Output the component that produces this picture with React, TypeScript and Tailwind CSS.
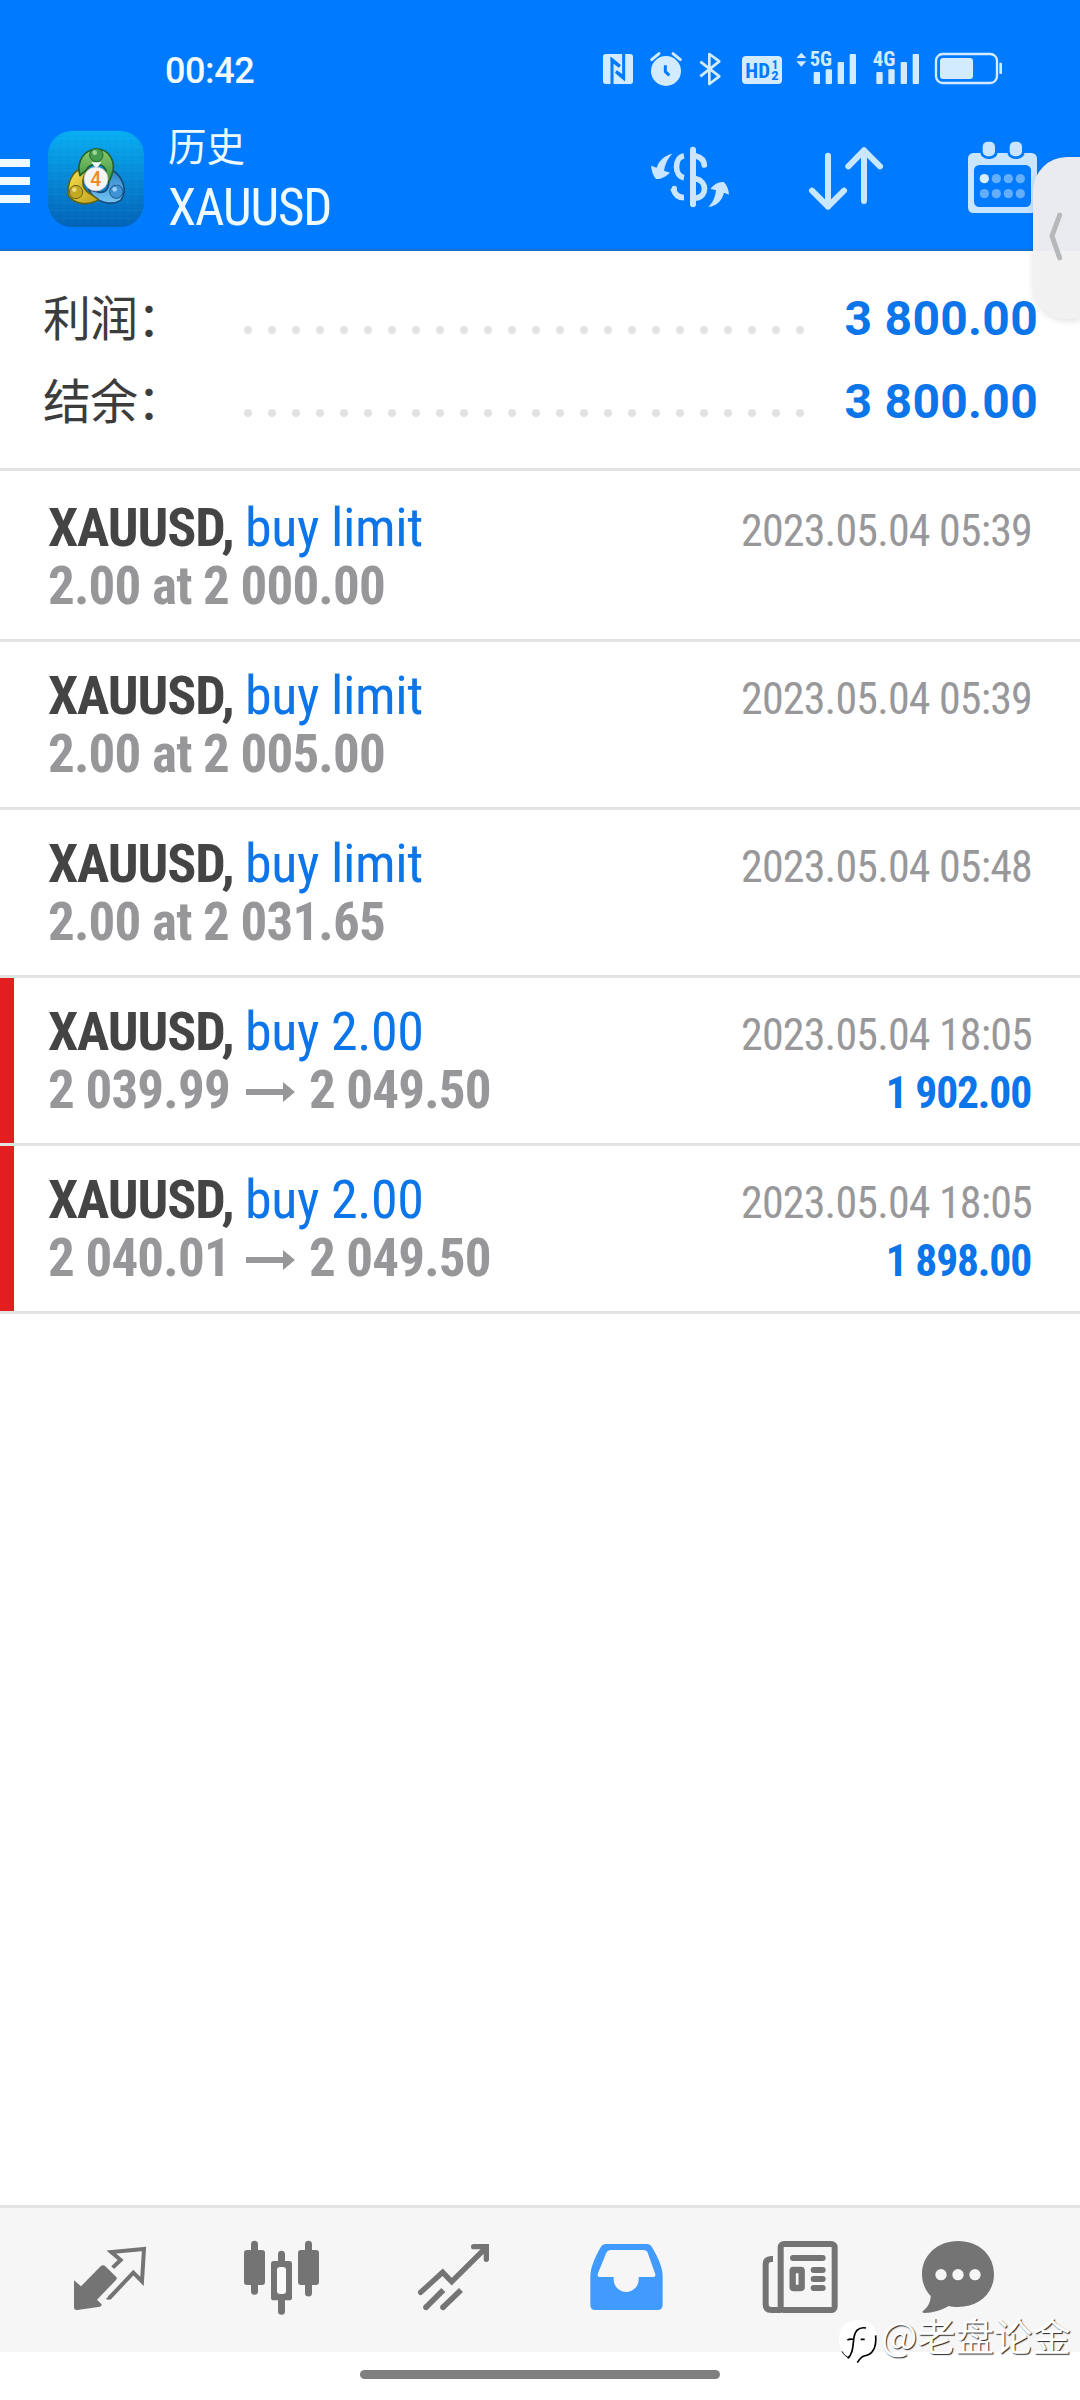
import type { ReactNode } from "react";

type Deal = {
  action: string;
  volume?: string;
  open?: string;
  close?: string;
  time: string;
  profit?: string;
};

const deals: Deal[] = [
  { action: "buy limit", volume: "2.00 at 2 000.00", time: "2023.05.04 05:39" },
  { action: "buy limit", volume: "2.00 at 2 005.00", time: "2023.05.04 05:39" },
  { action: "buy limit", volume: "2.00 at 2 031.65", time: "2023.05.04 05:48" },
  { action: "buy 2.00", open: "2 039.99", close: "2 049.50", time: "2023.05.04 18:05", profit: "1 902.00" },
  { action: "buy 2.00", open: "2 040.01", close: "2 049.50", time: "2023.05.04 18:05", profit: "1 898.00" },
];

function Svg({ box, className, children }: { box: string; className: string; children: ReactNode }) {
  return (
    <svg viewBox={box} className={"block shrink-0 overflow-visible " + className} fill="none">
      {children}
    </svg>
  );
}

function StatusIcons() {
  const c = "#d3ebff";
  const bg = "#007aff";
  return (
    <div className="mt-[45px] flex">
      <Svg box="60 45 126 126" className="h-[42px] w-[42px]">
        <rect x="69" y="72" width="90" height="90" rx="8" fill={c} />
        <path d="M96 162V92L119 110M131 72V141L108 124" stroke={bg} strokeWidth="9" />
        <path d="M96 92V88L120 108M131 141V146L108 126" stroke={bg} strokeWidth="8" />
      </Svg>
      <Svg box="186 45 147 126" className="h-[42px] w-[49px]">
        <circle cx="258" cy="123" r="45" fill={c} />
        <path d="M215 89L237 71M301 89L279 71" stroke={c} strokeWidth="9" strokeLinecap="round" />
        <path d="M256 106V125L268 136" stroke={bg} strokeWidth="9" />
      </Svg>
      <Svg box="333 45 117 126" className="h-[42px] w-[39px]">
        <path d="M361 95L418 139L388 162V72L418 94L361 139" stroke={c} strokeWidth="8" strokeLinejoin="round" />
      </Svg>
      <Svg box="450 45 180 126" className="h-[42px] w-[60px]">
        <rect x="486" y="78" width="120" height="84" rx="12" fill={c} />
        <text x="496" y="143" fontSize="62" fontWeight="700" textLength="74" lengthAdjust="spacingAndGlyphs" fontFamily="Roboto Condensed" fill={bg}>HD</text>
        <text x="575" y="117" fontSize="38" fontWeight="700" fontFamily="Roboto Condensed" fill={bg}>1</text>
        <text x="574" y="151" fontSize="38" fontWeight="700" textLength="22" lengthAdjust="spacingAndGlyphs" fontFamily="Roboto Condensed" fill={bg}>2</text>
      </Svg>
      <Svg box="630 45 225 126" className="h-[42px] w-[75px]">
        <path d="M649 84L664 68L679 84ZM649 94L664 110L679 94Z" fill={c} />
        <text x="689" y="109" fontSize="58" fontWeight="700" textLength="67" lengthAdjust="spacingAndGlyphs" fontFamily="Roboto Condensed" fill={c}>5G</text>
        <rect x="701" y="126" width="19" height="36" rx="3" fill={c} />
        <rect x="737" y="118" width="19" height="44" rx="3" fill={c} />
        <rect x="773" y="96" width="19" height="66" rx="3" fill={c} />
        <rect x="809" y="72" width="19" height="90" rx="3" fill={c} />
      </Svg>
      <Svg box="855 45 186 126" className="h-[42px] w-[62px]">
        <text x="878" y="109" fontSize="58" fontWeight="700" textLength="68" lengthAdjust="spacingAndGlyphs" fontFamily="Roboto Condensed" fill={c}>4G</text>
        <rect x="889" y="126" width="19" height="36" rx="3" fill={c} />
        <rect x="925" y="118" width="19" height="44" rx="3" fill={c} />
        <rect x="962" y="96" width="19" height="66" rx="3" fill={c} />
        <rect x="998" y="72" width="19" height="90" rx="3" fill={c} />
      </Svg>
      <Svg box="1041 45 249 126" className="h-[42px] w-[83px]">
        <rect x="1068" y="72" width="183" height="87" rx="20" stroke={c} strokeWidth="7" />
        <rect x="1080" y="84" width="99" height="63" rx="9" fill={c} />
        <rect x="1258" y="98" width="8" height="34" rx="3" fill={c} />
      </Svg>
    </div>
  );
}

function AppLogo() {
  return (
    <Svg box="144 302 288 288" className="h-24 w-24">
      <defs>
        <linearGradient id="tile" x1="0" y1="0" x2="0" y2="1">
          <stop offset="0" stopColor="#08aef2" />
          <stop offset="0.45" stopColor="#068ad8" />
          <stop offset="1" stopColor="#0262b6" />
        </linearGradient>
        <linearGradient id="green" x1="0" y1="0" x2="0" y2="1">
          <stop offset="0" stopColor="#8fcb6e" />
          <stop offset="1" stopColor="#2f8f3e" />
        </linearGradient>
        <linearGradient id="yellow" x1="0" y1="0" x2="1" y2="1">
          <stop offset="0" stopColor="#f8e04f" />
          <stop offset="1" stopColor="#bea01c" />
        </linearGradient>
        <linearGradient id="blue" x1="0" y1="0" x2="0" y2="1">
          <stop offset="0" stopColor="#2b7dc5" />
          <stop offset="1" stopColor="#75c4f2" />
        </linearGradient>
      </defs>
      <rect x="144" y="302" width="288" height="288" rx="72" fill="url(#tile)" />
      <path
        d="M168 340V550M192 310V582M216 302V590M240 302V590M264 302V590M288 302V590M312 302V590M336 302V590M360 302V590M384 310V582M408 340V550M168 324H408M150 348H426M144 372H432M144 396H432M144 420H432M144 444H432M144 468H432M144 492H432M144 516H432M144 540H432M162 564H414"
        stroke="#6fdcff"
        strokeOpacity="0.12"
        strokeWidth="2"
      />
      <path d="M316 412C366 424 386 478 362 510C338 526 286 520 266 478L300 486C330 488 334 446 316 412Z" fill="url(#blue)" stroke="#164d7e" strokeWidth="5" strokeLinejoin="round" />
      <path d="M266 416C230 406 202 440 204 494C222 522 264 528 296 508L270 490C240 474 244 440 266 416Z" fill="url(#yellow)" stroke="#5d6418" strokeWidth="5" strokeLinejoin="round" />
      <path d="M240 436C228 392 252 358 290 356C328 356 352 396 334 438C328 456 318 462 312 462L318 420C308 396 270 396 258 420Z" fill="url(#green)" stroke="#22602c" strokeWidth="5" strokeLinejoin="round" />
      <path d="M274 396H304L289 416ZM228 462L246 480L228 494ZM350 460L330 484L352 492Z" fill="#f1fbff" />
      <circle cx="289" cy="374" r="20" fill="#459b4f" stroke="#286430" strokeWidth="3" />
      <circle cx="228" cy="485" r="20" fill="#c3a822" stroke="#6a6518" strokeWidth="3" />
      <circle cx="349" cy="484" r="20" fill="#3d93d6" stroke="#1c5485" strokeWidth="3" />
      <circle cx="284" cy="367" r="7" fill="#c9efb4" fillOpacity="0.7" />
      <circle cx="223" cy="478" r="7" fill="#fbf2a0" fillOpacity="0.7" />
      <circle cx="344" cy="477" r="7" fill="#c5e9ff" fillOpacity="0.7" />
      <circle cx="288" cy="446" r="36" fill="#f5f5f5" stroke="#b9b9b9" strokeWidth="2" />
      <text x="287" y="466" textAnchor="middle" fontSize="58" fontWeight="500" fontFamily="Roboto" fill="#f08a24">4</text>
    </Svg>
  );
}

function CurrencyIcon() {
  return (
    <Svg box="150 60 249 225" className="h-[75px] w-[83px]">
      <path d="M252 108C222 112 222 168 252 173M219 205C224 222 236 233 252 233" stroke="#c9e5ff" strokeWidth="17" />
      <circle cx="223" cy="205" r="8" fill="#c9e5ff" />
      <path d="M288 108C302 112 312 122 313 135M288 176C322 184 322 230 288 234" stroke="#c9e5ff" strokeWidth="17" strokeLinecap="round" />
      <path d="M279 89V253" stroke="#c9e5ff" strokeWidth="18" strokeLinecap="round" />
      <path d="M217 101C194 106 176 122 170 143L153 137C155 154 160 168 168 177C182 178 198 170 210 158L192 152C195 132 203 115 217 101Z" fill="#c9e5ff" />
      <path d="M325 261C350 258 366 242 372 218L387 224C386 208 380 194 371 186C357 184 343 192 331 206L348 211C346 231 338 249 325 261Z" fill="#c9e5ff" />
    </Svg>
  );
}

function SortIcon() {
  return (
    <Svg box="621 60 237 225" className="h-[75px] w-[79px]">
      <path d="M684 107V260M636 212L684 260L732 212M792 243V91M745 139L792 91L840 139" stroke="#c9e7ff" strokeWidth="18" strokeLinecap="round" strokeLinejoin="round" />
    </Svg>
  );
}

function CalendarIcon() {
  return (
    <Svg box="1098 60 219 225" className="h-[75px] w-[73px]">
      <rect x="1104" y="99" width="207" height="180" rx="16" fill="#c9e5ff" />
      <rect x="1122" y="135" width="171" height="126" rx="16" fill="#007aff" />
      <rect x="1141" y="58" width="52" height="59" rx="22" fill="#007aff" />
      <rect x="1222" y="58" width="52" height="59" rx="22" fill="#007aff" />
      <rect x="1148" y="65" width="37" height="44" rx="15" fill="#c9e5ff" />
      <rect x="1229" y="65" width="37" height="44" rx="15" fill="#c9e5ff" />
      {[1153, 1189, 1225, 1261].map((x) => (
        <g key={x}>
          <circle cx={x} cy="176" r="14" fill={x === 1153 ? "#d9edff" : "#64adff"} />
          <circle cx={x} cy="221" r="14" fill="#64adff" />
        </g>
      ))}
    </Svg>
  );
}

function SummaryRow({ label, value }: { label: string; value: string }) {
  return (
    <div className="flex h-[83px] items-center">
      <div className="w-[201px] font-['Noto_Sans_CJK_SC',sans-serif] text-[48px] leading-[83px] font-normal tracking-[-1px] text-[#3c3c3c]">
        {label}
      </div>
      <div className="flex w-[560px] justify-between pt-[29px]">
        {Array.from({ length: 24 }, (_, i) => (
          <i key={i} className="h-2 w-2 rounded-full bg-[#e3e3e3]" />
        ))}
      </div>
      <div className="flex-1 pt-[6px] pr-[42px] text-right font-['Roboto',sans-serif] text-[48px] leading-[77px] font-bold tracking-[0.3px] text-[#0b75e9]">
        {value}
      </div>
    </div>
  );
}

function DealRow({ deal }: { deal: Deal }) {
  return (
    <div className="flex h-[168px] border-b-[3px] border-[#e3e3e3]">
      <div className={deal.profit ? "w-[14px] bg-[#e21e1e]" : "w-[14px]"} />
      <div className="flex-1 pt-[23.5px] pr-[48px] pl-[34px] leading-[59px]">
        <div className="flex h-[59px] items-baseline justify-between">
          <div className="text-[54px] whitespace-pre">
            <span className="font-bold tracking-[-1.1px] text-[#444]">XAUUSD, </span>
            <span className="tracking-[-0.4px] text-[#0b75e9]">{deal.action}</span>
          </div>
          <div className="text-[44px] tracking-[-0.83px] text-[#98989a]">{deal.time}</div>
        </div>
        <div className="flex h-[59px] items-baseline justify-between">
          <div className="flex items-baseline text-[53px] font-bold tracking-[-0.8px] text-[#97979a]">
            {deal.volume ?? (
              <>
                <span>{deal.open}</span>
                <svg viewBox="0 0 49 26" className="mr-[14px] ml-4 h-[26px] w-[49px]">
                  <path d="M0 7H37V0L49 10L37 20V13H0Z" fill="#97979a" />
                </svg>
                <span>{deal.close}</span>
              </>
            )}
          </div>
          {deal.profit && (
            <div className="mr-px text-[43.5px] font-bold tracking-[-1.15px] text-[#0b75e9]">{deal.profit}</div>
          )}
        </div>
      </div>
    </div>
  );
}

function NavBar() {
  const g = "#747474";
  return (
    <nav className="flex h-[147px] border-t-[3px] border-[#e3e3e3] bg-[#f6f6f6] pt-[31px] pl-[72px]">
      <Svg box="36 57 228 234" className="h-[78px] w-[76px]">
        <path d="M42 181L63 199L122 139Q129 132 136 139L168 170Q173 175 168 180L111 239L125 253Q126 258 120 260L52 270Q42 271 42 262Z" fill={g} />
        <path d="M158 143L182 120L154 96L252 87L246 184L220 158L148 234" stroke={g} strokeWidth="12" />
        <circle cx="155" cy="96" r="6" fill={g} />
        <path d="M137 237Q146 242 153 237L148 228Z" fill={g} />
      </Svg>
      <Svg box="546 57 237 234" className="ml-[94px] h-[78px] w-[79px]">
        <path d="M583.500 73V214M745.500 73V219M664.500 103V130M664.500 230V274" stroke={g} strokeWidth="21" strokeLinecap="round" />
        <rect x="552" y="90" width="63" height="105" rx="9" fill={g} />
        <rect x="714" y="90" width="63" height="105" rx="9" fill={g} />
        <rect x="633" y="123" width="63" height="118" rx="8" fill={g} />
        <rect x="651" y="141" width="27" height="81" rx="9" fill="#fafafa" />
      </Svg>
      <Svg box="1068 57 225 234" className="ml-[95px] h-[78px] w-[75px]">
        <path d="M1082 217L1148 157L1175 185L1277 84M1241 80H1279V118" stroke={g} strokeWidth="16" strokeLinecap="round" />
        <path d="M1098 262L1150 210M1149 262L1203 210" stroke={g} strokeWidth="17" />
        <circle cx="1098" cy="262" r="8.500" fill={g} />
        <circle cx="1149" cy="262" r="8.500" fill={g} />
      </Svg>
      <Svg box="24 57 231 234" className="ml-[97px] h-[78px] w-[77px]">
        <path
          fillRule="evenodd"
          d="M78 72H200Q210 72 216 82C234 112 248 142 248 170V254Q248 270 232 270H46Q31 270 31 254V170C31 142 46 110 62 82Q68 72 78 72ZM92 90Q83 90 79 98L54 160Q50 171 60 171H101V178A37.500 38 0 0 0 176 178V171H219Q229 171 225 160L203 98Q200 90 190 90Z"
          fill="#419bff"
        />
      </Svg>
      <Svg box="543 57 234 234" className="ml-[96px] h-[78px] w-[78px]">
        <rect x="602" y="72" width="162" height="198" rx="10" stroke={g} strokeWidth="18" />
        <path d="M579 117H574Q557 118 557 132V252Q557 270 574 270H604" stroke={g} strokeWidth="18" />
        <path d="M639 114H728M701 150H728M701 177H728M701 204H728" stroke={g} strokeWidth="18" strokeLinecap="round" />
        <rect x="638" y="150" width="27" height="54" rx="2" stroke={g} strokeWidth="19" />
      </Svg>
      <Svg box="1020 57 228 234" className="ml-[81px] h-[78px] w-[76px]">
        <path d="M1134 63C1198 63 1242 106 1242 163C1242 220 1196 261 1134 261C1124 261 1114 260 1106 258C1086 270 1058 279 1034 279C1024 278 1026 275 1030 272C1044 261 1052 246 1052 228C1036 210 1026 190 1026 163C1026 106 1072 63 1134 63Z" fill={g} />
        <circle cx="1083" cy="164" r="17" fill="#f6f6f6" />
        <circle cx="1134" cy="164" r="17" fill="#f6f6f6" />
        <circle cx="1185" cy="164" r="17" fill="#f6f6f6" />
      </Svg>
    </nav>
  );
}

function Watermark() {
  return (
    <div className="absolute top-[2309px] left-[837px] flex items-start">
      <Svg box="771 276 135 159" className="mt-[3px] h-[53px] w-[45px]">
        <path d="M834 301C872 301 890 320 890 354C890 388 872 414 830 428L826 414C792 414 777 392 777 358C777 322 796 301 834 301Z" fill="#fff" />
        <path d="M858 324C834 320 824 334 821 358C818 390 816 404 803 415M802 360C810 356 814 358 822 358M842 358H854M887 346C890 384 878 404 852 408C842 411 838 418 832 428" stroke="#000" strokeWidth="5" />
        <path d="M786 394Q794 410 809 413" stroke="#000" strokeWidth="3" />
      </Svg>
      <span className="-ml-px font-['Noto_Sans_CJK_SC',sans-serif] text-[38.4px] leading-[50px] text-white [text-shadow:1px_1px_1px_rgba(0,0,0,0.85)]">
        @老盘论金
      </span>
    </div>
  );
}

export default function App() {
  return (
    <div className="relative flex h-[2400px] w-[1080px] flex-col overflow-hidden bg-white font-['Roboto_Condensed','Roboto',sans-serif]">
      <header className="h-[251px] border-b-2 border-[#1a70c8] bg-[#007aff]">
        <div className="flex h-[120px] items-start pl-[165px]">
          <div className="mt-[53px] w-[435px] font-['Roboto',sans-serif] text-[36px] leading-[37px] font-medium tracking-[-0.4px] text-[#f2faff]">
            00:42
          </div>
          <StatusIcons />
        </div>
        <div className="flex items-start">
          <div className="mt-[39px] flex w-[30px] flex-col gap-[10px]">
            <i className="h-2 bg-[#effaff]" />
            <i className="h-2 bg-[#effaff]" />
            <i className="h-2 bg-[#effaff]" />
          </div>
          <div className="mt-[11px] ml-[18px]">
            <AppLogo />
          </div>
          <div className="ml-6 w-[482px] text-[#effaff]">
            <div className="-mt-px font-['Noto_Sans_CJK_SC',sans-serif] text-[38.5px] leading-[50px] font-normal">历史</div>
            <div className="mt-px text-[51px] leading-[75px] font-[450] tracking-[-1.1px]">XAUUSD</div>
          </div>
          <div className="mt-5 flex">
            <CurrencyIcon />
            <div className="ml-[74px]">
              <SortIcon />
            </div>
            <div className="ml-20">
              <CalendarIcon />
            </div>
          </div>
        </div>
      </header>

      <section className="h-[220px] border-b-[3px] border-[#e3e3e3] pt-[23px] pl-[43px]">
        <SummaryRow label="利润：" value="3 800.00" />
        <SummaryRow label="结余：" value="3 800.00" />
      </section>

      <main className="flex-1 pt-[3px]">
        {deals.map((deal, i) => (
          <DealRow key={i} deal={deal} />
        ))}
      </main>

      <NavBar />
      <footer className="flex h-12 justify-center pt-[18px]">
        <div className="h-[9px] w-[360px] rounded-full bg-[#7f7f7f]" />
      </footer>

      <div className="absolute top-[157px] right-0 h-[162px] w-[47px] rounded-l-[34px] bg-[linear-gradient(#eaebef_0_94px,#f1f1f1_94px)] shadow-[0_2px_6px_rgba(0,0,0,0.12)]">
        <svg viewBox="1300 111 141 486" className="h-[162px] w-[47px]" fill="none">
          <path d="M1380 285L1357 348L1380 414" stroke="#b6b8ba" strokeWidth="15" strokeLinecap="round" strokeLinejoin="round" />
        </svg>
      </div>
      <Watermark />
    </div>
  );
}
